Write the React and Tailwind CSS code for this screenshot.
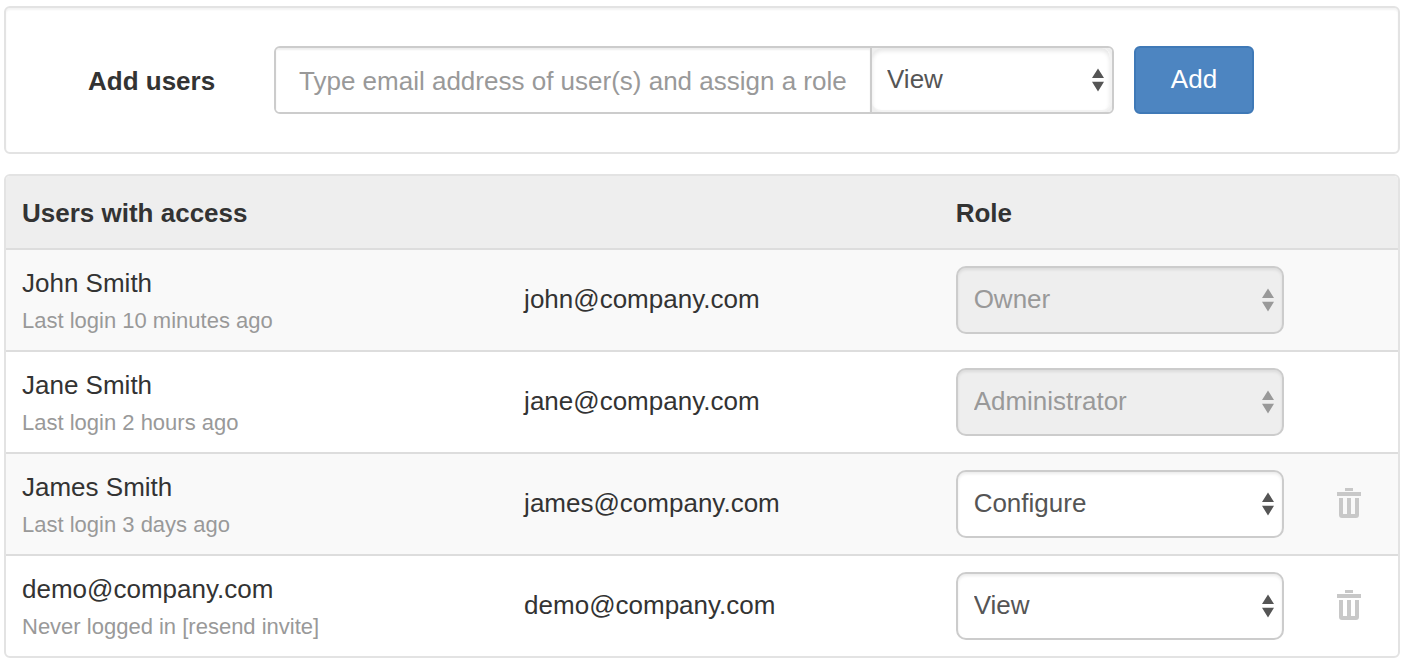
const ROLES = ["Owner", "Administrator", "Configure", "View"];

const USERS = [
  { name: "John Smith", note: "Last login 10 minutes ago", email: "john@company.com", role: "Owner", locked: true },
  { name: "Jane Smith", note: "Last login 2 hours ago", email: "jane@company.com", role: "Administrator", locked: true },
  { name: "James Smith", note: "Last login 3 days ago", email: "james@company.com", role: "Configure" },
  { name: "demo@company.com", note: "Never logged in ", invite: true, email: "demo@company.com", role: "View" },
];

function Arrows({ className }) {
  return (
    <svg
      viewBox="0 0 12 24"
      className={`pointer-events-none absolute top-1/2 h-6 w-3 -translate-y-1/2 ${className}`}
      fill="currentColor"
      aria-hidden="true"
    >
      <path d="M6 0.5 L12 10 H0 Z M0 13.8 H12 L6 23.5 Z" />
    </svg>
  );
}

function TrashIcon() {
  return (
    <svg viewBox="0 0 24 30" className="h-[30px] w-6" fill="currentColor" aria-hidden="true">
      <path d="M8 0h8v3H8z M0 4h24v4H0z" />
      <path d="M2 10h4v16h4V10h4v16h4V10h4v17a3 3 0 0 1-3 3H5a3 3 0 0 1-3-3z" />
    </svg>
  );
}

function RoleSelect({ user }) {
  return (
    <div className="relative w-full max-w-[328px]">
      <select
        aria-label={`Role of ${user.name}`}
        defaultValue={user.role}
        disabled={user.locked}
        className="block h-17 w-full appearance-none rounded-[10px] border-2 border-[#ccc] bg-white pr-10 pb-0.5 pl-4 text-[26px] text-[#555] opacity-100 shadow-[inset_0_2px_3px_rgba(0,0,0,0.08)] disabled:bg-[#eee] disabled:text-[#999]"
      >
        {ROLES.map((role) => (
          <option key={role}>{role}</option>
        ))}
      </select>
      <Arrows className={user.locked ? "right-2.5 text-[#999]" : "right-2.5 text-[#555]"} />
    </div>
  );
}

export default function App() {
  return (
    <main className="flex flex-col gap-5 bg-white pt-1.5 pr-1.5 pb-1.5 pl-1 font-['Liberation_Sans',Arial,sans-serif] text-[26px] text-[#333]">
      <form
        onSubmit={(event) => event.preventDefault()}
        className="flex items-center rounded-md border-2 border-[#e3e3e3] bg-white py-[38px] pr-36 pl-[82px] shadow-[inset_0_2px_2px_rgba(0,0,0,0.05)]"
      >
        <label htmlFor="emails" className="w-[186px] shrink-0 pt-0.5 font-bold">
          Add users
        </label>
        <div className="flex h-17 min-w-0 flex-1 overflow-hidden rounded-md border-2 border-[#ccc]">
          <input
            id="emails"
            type="text"
            placeholder="Type email address of user(s) and assign a role"
            className="min-w-0 flex-1 bg-white px-[23px] pt-0.5 shadow-[inset_0_2px_2px_rgba(0,0,0,0.07)] outline-none placeholder:text-[#999]"
          />
          <div className="relative w-[242px] shrink-0 border-l-2 border-[#ccc] bg-[#eee]">
            <select
              aria-label="Role for new users"
              defaultValue="View"
              className="block h-full w-full appearance-none rounded-[10px] border-r-2 border-b-2 border-[#f3f3f3] bg-white pr-10 pl-[15px] text-[#555] shadow-[inset_0_3px_4px_rgba(0,0,0,0.1)] outline-none"
            >
              {ROLES.map((role) => (
                <option key={role}>{role}</option>
              ))}
            </select>
            <Arrows className="right-2 text-[#555]" />
          </div>
        </div>
        <button
          type="submit"
          className="ml-5 h-17 w-[120px] shrink-0 rounded-md border-2 border-[#3f79b7] bg-[#4d85c1] pb-0.5 text-white"
        >
          Add
        </button>
      </form>

      <section className="overflow-hidden rounded-md border-2 border-[#e3e3e3]">
        <table className="w-full table-fixed border-collapse text-left">
          <thead>
            <tr className="h-[73px] bg-[#eee]">
              <th className="w-[36%] px-4 pt-0.5 font-bold">Users with access</th>
              <th className="w-[31%]" />
              <th className="w-[26%] pt-0.5 pl-[17px] font-bold">Role</th>
              <th className="w-[7%]" />
            </tr>
          </thead>
          <tbody>
            {USERS.map((user) => (
              <tr key={user.name} className="h-[102px] border-t-2 border-[#ddd] odd:bg-[#f9f9f9] last:h-[101px]">
                <td className="px-4 pt-1.5">
                  <div className="leading-9">{user.name}</div>
                  <div className="text-[22px] leading-10 text-[#999]">
                    {user.note}
                    {user.invite && <a href="#resend">[resend invite]</a>}
                  </div>
                </td>
                <td className="pr-4 pb-0.5 pl-[17px]">{user.email}</td>
                <td className="pr-4 pl-[17px]">
                  <RoleSelect user={user} />
                </td>
                <td className="pb-0.5">
                  {!user.locked && (
                    <button type="button" aria-label={`Remove ${user.name}`} className="mx-auto block text-[#c8c8c8]">
                      <TrashIcon />
                    </button>
                  )}
                </td>
              </tr>
            ))}
          </tbody>
        </table>
      </section>
    </main>
  );
}
